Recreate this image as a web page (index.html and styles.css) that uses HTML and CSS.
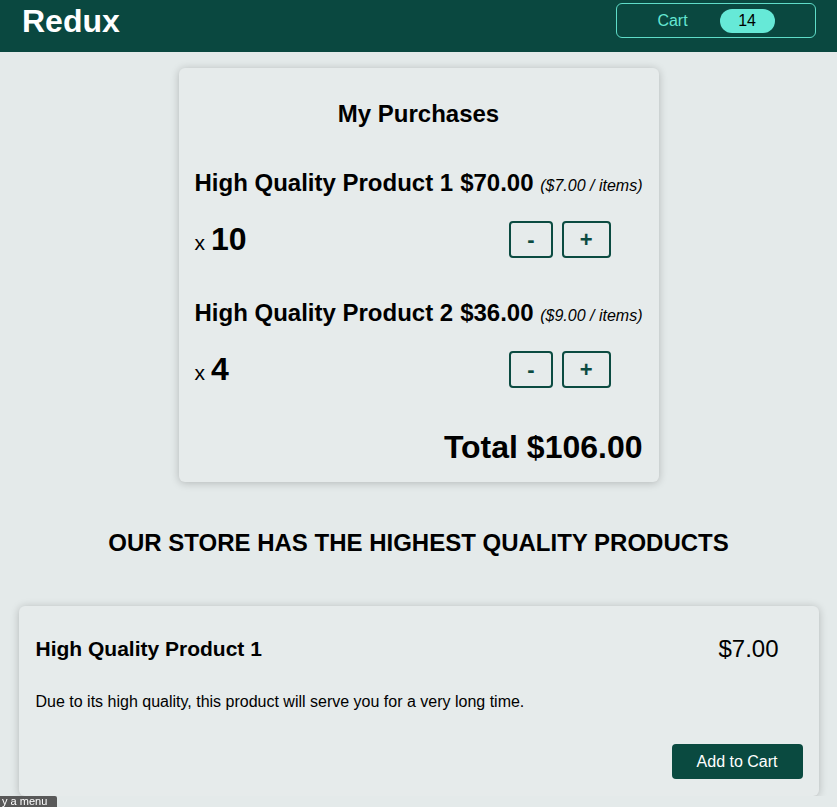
FILE: index.html
```html
<!DOCTYPE html>
<html lang="en">
<head>
<meta charset="utf-8">
<title>Redux Cart</title>
<link rel="stylesheet" href="styles.css">
</head>
<body>
<header class="main-header">
  <h1 class="logo">Redux</h1>
  <button class="cart-button"><span class="cart-label">Cart</span><span class="badge">14</span></button>
</header>
<main>
  <section class="card cart">
    <h2 class="cart-title">My Purchases</h2>
    <ul class="cart-list">
      <li class="cart-item">
        <div class="item-head">
          <h3 class="item-title">High Quality Product 1</h3>
          <div class="item-price">$70.00 <span class="unit-price">($7.00 / items)</span></div>
        </div>
        <div class="item-details">
          <div class="quantity"><span class="times">x</span> <span class="qty">10</span></div>
          <div class="qty-actions"><button class="qty-btn">-</button><button class="qty-btn">+</button></div>
        </div>
      </li>
      <li class="cart-item">
        <div class="item-head">
          <h3 class="item-title">High Quality Product 2</h3>
          <div class="item-price">$36.00 <span class="unit-price">($9.00 / items)</span></div>
        </div>
        <div class="item-details">
          <div class="quantity"><span class="times">x</span> <span class="qty">4</span></div>
          <div class="qty-actions"><button class="qty-btn">-</button><button class="qty-btn">+</button></div>
        </div>
      </li>
    </ul>
    <div class="total">Total $106.00</div>
  </section>
  <section class="products">
    <h2 class="products-title">Our store has the highest quality products</h2>
    <article class="card product">
      <div class="product-head">
        <h3 class="product-title">High Quality Product 1</h3>
        <div class="product-price">$7.00</div>
      </div>
      <p class="product-desc">Due to its high quality, this product will serve you for a very long time.</p>
      <div class="product-actions"><button class="add-btn">Add to Cart</button></div>
    </article>
  </section>
</main>
<div class="tooltip">y a menu</div>
</body>
</html>
```
FILE: styles.css
```css
* { box-sizing: border-box; }
html { overflow: hidden; }
body {
  margin: 0;
  background: #e4eaea;
  font-family: "Liberation Sans", Arial, Helvetica, sans-serif;
  color: #000;
}
.main-header {
  height: 52px;
  background: #0a4840;
  display: flex;
  justify-content: space-between;
  align-items: center;
  padding: 0 21px 11px 22px;
}
.logo {
  margin: 0;
  color: #fff;
  font-size: 32px;
  line-height: 1;
  font-weight: bold;
}
.cart-button {
  width: 200px;
  height: 35px;
  background: transparent;
  border: 1.5px solid #5fdcc8;
  border-radius: 6px;
  display: flex;
  align-items: center;
  justify-content: center;
  gap: 32px;
  font-family: inherit;
  padding: 0;
}
.cart-label { color: #64e6d2; font-size: 16px; }
.badge {
  width: 55px;
  height: 24px;
  border-radius: 12px;
  background: #66e9d7;
  color: #000;
  font-size: 16px;
  display: flex;
  align-items: center;
  justify-content: center;
}
.card {
  background: #e6ebeb;
  border-radius: 6px;
  box-shadow: 0 1px 8px rgba(0, 0, 0, 0.22);
}
.cart {
  width: 480px;
  margin: 16px auto 0;
  padding: 16px;
}
.cart-title {
  margin: 16px 0 0;
  text-align: center;
  font-size: 24px;
  line-height: 28px;
}
.cart-list { list-style: none; margin: 0; padding: 0; }
.cart-item { margin-top: 41px; }
.item-head {
  display: flex;
  justify-content: space-between;
  align-items: baseline;
  height: 28px;
}
.item-title { margin: 0; font-size: 24px; line-height: 28px; }
.item-price { font-size: 24px; font-weight: bold; line-height: 28px; }
.unit-price { font-size: 16px; font-weight: normal; font-style: italic; }
.item-details {
  display: flex;
  justify-content: space-between;
  align-items: center;
  margin-top: 24px;
  padding-right: 32px;
}
.quantity { display: flex; align-items: baseline; gap: 6px; }
.times { font-size: 21px; }
.qty { font-size: 32px; font-weight: bold; }
.qty-actions { display: flex; gap: 9px; }
.qty-btn {
  height: 37px;
  padding: 0 16px;
  background: transparent;
  border: 2px solid #0b4b41;
  border-radius: 4px;
  color: #0b4b41;
  font-family: inherit;
  font-size: 22px;
  font-weight: bold;
  line-height: 1;
}
.total {
  margin-top: 40px;
  text-align: right;
  font-size: 32px;
  font-weight: bold;
  line-height: 38px;
}
.products {
  width: 800px;
  margin: 0 auto;
}
.products-title {
  margin: 47px 0 49px;
  text-align: center;
  text-transform: uppercase;
  font-size: 24px;
  line-height: 28px;
}
.product { padding: 16px 16px 17px 17px; }
.product-head {
  display: flex;
  justify-content: space-between;
  align-items: center;
  height: 28px;
  margin-top: 13px;
  padding-right: 24px;
}
.product-title { margin: 0; font-size: 21px; }
.product-price { font-size: 24px; }
.product-desc {
  margin: 30px 0 0;
  font-size: 16px;
  line-height: 18px;
}
.product-actions {
  display: flex;
  justify-content: flex-end;
  margin-top: 33px;
}
.add-btn {
  height: 35px;
  padding: 0 25px;
  background: #0a4a40;
  color: #fff;
  border: none;
  border-radius: 4px;
  font-family: inherit;
  font-size: 16px;
}
.tooltip {
  position: fixed;
  left: 0;
  top: 796px;
  width: 57px;
  height: 11px;
  padding: 0 0 0 2px;
  background: #595959;
  color: #fff;
  font-size: 11px;
  line-height: 11px;
  border-radius: 0 2px 0 0;
}
```
